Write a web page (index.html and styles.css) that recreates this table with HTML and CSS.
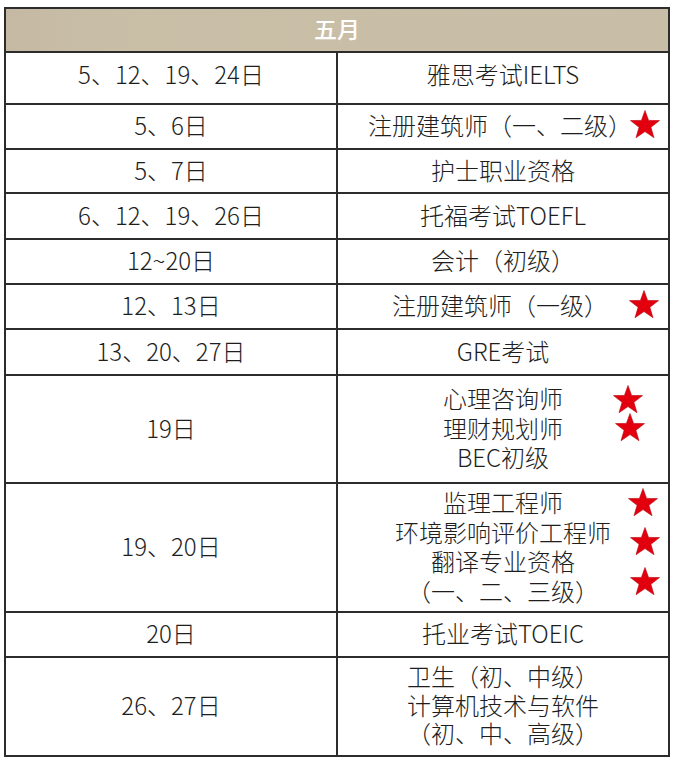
FILE: index.html
```html
<!DOCTYPE html>
<html lang="zh">
<head>
<meta charset="utf-8">
<title>五月</title>
<link rel="stylesheet" href="styles.css">
</head>
<body>
<table class="schedule">
  <thead>
    <tr class="h44"><th colspan="2" class="month">五月</th></tr>
  </thead>
  <tbody>
    <tr class="h52"><td class="up">5、12、19、24日</td><td class="up">雅思考试IELTS</td></tr>
    <tr class="h45"><td>5、6日</td><td class="exam"><span class="shift-l">注册建筑师（一、二级）</span><svg class="star s-r2" viewBox="0 0 30 28"><polygon points="15,0.5 18.6,10.4 29.5,10.6 20.9,17.3 24,27.7 15,21.6 6,27.7 9.1,17.3 0.5,10.6 11.4,10.4"/></svg></td></tr>
    <tr class="h44"><td>5、7日</td><td>护士职业资格</td></tr>
    <tr class="h46"><td>6、12、19、26日</td><td>托福考试TOEFL</td></tr>
    <tr class="h45"><td>12~20日</td><td>会计（初级）</td></tr>
    <tr class="h45"><td>12、13日</td><td class="exam"><span class="shift-l">注册建筑师（一级）</span><svg class="star s-r6" viewBox="0 0 30 28"><polygon points="15,0.5 18.6,10.4 29.5,10.6 20.9,17.3 24,27.7 15,21.6 6,27.7 9.1,17.3 0.5,10.6 11.4,10.4"/></svg></td></tr>
    <tr class="h46"><td>13、20、27日</td><td>GRE考试</td></tr>
    <tr class="h108"><td>19日</td><td class="exam multi">心理咨询师<br>理财规划师<br>BEC初级<svg class="star s-r8a" viewBox="0 0 30 28"><polygon points="15,0.5 18.6,10.4 29.5,10.6 20.9,17.3 24,27.7 15,21.6 6,27.7 9.1,17.3 0.5,10.6 11.4,10.4"/></svg><svg class="star s-r8b" viewBox="0 0 30 28"><polygon points="15,0.5 18.6,10.4 29.5,10.6 20.9,17.3 24,27.7 15,21.6 6,27.7 9.1,17.3 0.5,10.6 11.4,10.4"/></svg></td></tr>
    <tr class="h129"><td>19、20日</td><td class="exam multi">监理工程师<br>环境影响评价工程师<br>翻译专业资格<br>（一、二、三级）<svg class="star s-r9a" viewBox="0 0 30 28"><polygon points="15,0.5 18.6,10.4 29.5,10.6 20.9,17.3 24,27.7 15,21.6 6,27.7 9.1,17.3 0.5,10.6 11.4,10.4"/></svg><svg class="star s-r9b" viewBox="0 0 30 28"><polygon points="15,0.5 18.6,10.4 29.5,10.6 20.9,17.3 24,27.7 15,21.6 6,27.7 9.1,17.3 0.5,10.6 11.4,10.4"/></svg><svg class="star s-r9c" viewBox="0 0 30 28"><polygon points="15,0.5 18.6,10.4 29.5,10.6 20.9,17.3 24,27.7 15,21.6 6,27.7 9.1,17.3 0.5,10.6 11.4,10.4"/></svg></td></tr>
    <tr class="h45"><td>20日</td><td>托业考试TOEIC</td></tr>
    <tr class="h99"><td>26、27日</td><td class="multi tight">卫生（初、中级）<br>计算机技术与软件<br>（初、中、高级）</td></tr>
  </tbody>
</table>
</body>
</html>
```

FILE: styles.css
```css
html, body {
  margin: 0;
  padding: 0;
  background: #ffffff;
}

body {
  padding: 7px 0 0 4px;
  font-family: "Noto Sans CJK SC", "Noto Sans", sans-serif;
  color: #1e1e1e;
}

.schedule {
  border-collapse: collapse;
  width: 666px;
  table-layout: fixed;
}

.schedule th,
.schedule td {
  border: 2px solid #2c2c2c;
  padding: 0;
  text-align: center;
  vertical-align: middle;
  font-size: 24px;
  line-height: 30px;
  font-weight: 300;
  width: 50%;
}

.schedule td {
  padding-bottom: 3px;
}

.schedule td.up {
  padding-bottom: 8px;
}

.month {
  background: linear-gradient(90deg, #c5b9a3 0%, #c9bfa7 20%, #c8bda6 100%);
  color: #ffffff;
  font-weight: 500 !important;
  font-size: 23px !important;
  padding-bottom: 4px !important;
}

.h44 { height: 44px; }
.h45 { height: 45px; }
.h46 { height: 46px; }
.h52 { height: 52px; }
.h99 { height: 99px; }
.h108 { height: 108px; }
.h129 { height: 129px; }

.exam {
  position: relative;
}

.multi {
  line-height: 29.5px !important;
}

.tight {
  line-height: 28.5px !important;
  padding-top: 8px;
}

.shift-l {
  display: inline-block;
  margin-right: 6px;
}

.star {
  position: absolute;
  width: 30px;
  height: 28px;
  fill: #e2000e;
  stroke: #b8000a;
  stroke-width: 0.6;
}

.s-r2 { right: 8px; top: 5px; }
.s-r6 { right: 9px; top: 5px; }
.s-r8a { right: 25px; top: 9px; }
.s-r8b { right: 23px; top: 37px; }
.s-r9a { right: 10px; top: 4px; }
.s-r9b { right: 8px; top: 43px; }
.s-r9c { right: 8px; top: 83px; }
```
